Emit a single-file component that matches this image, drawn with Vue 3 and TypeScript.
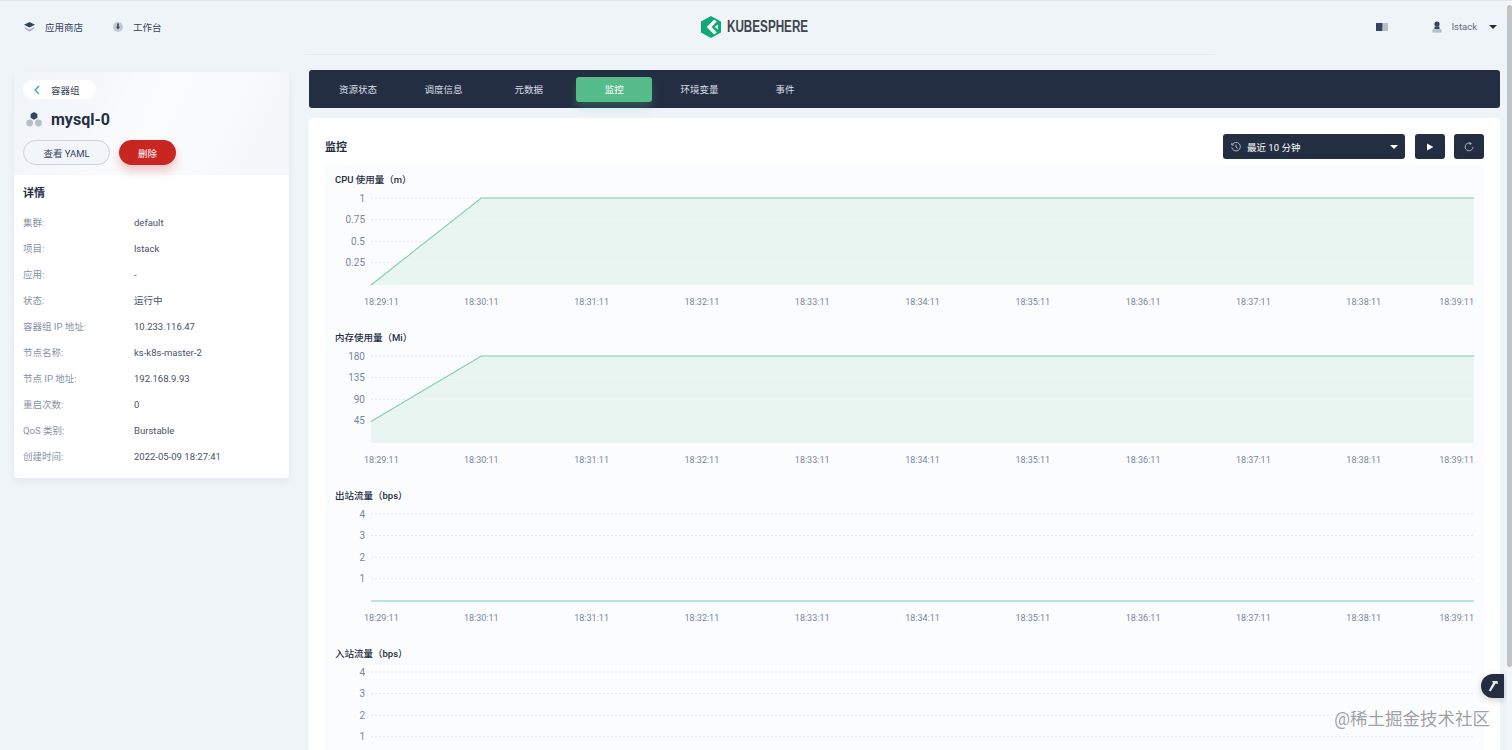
<script setup lang="ts">
interface Row { k: string; v: string }
interface Chart { title: string; ticks: string[]; points: number[]; filled: boolean; axis: boolean }

const rows: Row[] = [
  { k: '集群:', v: 'default' },
  { k: '项目:', v: 'lstack' },
  { k: '应用:', v: '-' },
  { k: '状态:', v: '运行中' },
  { k: '容器组 IP 地址:', v: '10.233.116.47' },
  { k: '节点名称:', v: 'ks-k8s-master-2' },
  { k: '节点 IP 地址:', v: '192.168.9.93' },
  { k: '重启次数:', v: '0' },
  { k: 'QoS 类别:', v: 'Burstable' },
  { k: '创建时间:', v: '2022-05-09 18:27:41' },
]
const tabs = ['资源状态', '调度信息', '元数据', '监控', '环境变量', '事件']
const times = ['18:29:11', '18:30:11', '18:31:11', '18:32:11', '18:33:11', '18:34:11', '18:35:11', '18:36:11', '18:37:11', '18:38:11', '18:39:11']

const L = 46
const R = 1149
const T = 10
const B = 97
const S = (R - L) / 10

const charts: Chart[] = [
  { title: 'CPU 使用量（m）', ticks: ['1', '0.75', '0.5', '0.25'], points: [B, T], filled: true, axis: true },
  { title: '内存使用量（Mi）', ticks: ['180', '135', '90', '45'], points: [T + 65.5, T], filled: true, axis: true },
  { title: '出站流量（bps）', ticks: ['4', '3', '2', '1'], points: [B, B], filled: false, axis: true },
  { title: '入站流量（bps）', ticks: ['4', '3', '2', '1'], points: [B, B], filled: false, axis: false },
]

function tickY(i: number): number {
  return T + i * 21.6
}
function linePath(p: number[]): string {
  return `M${L} ${p[0]} L${L + S} ${p[1]} L${R} ${p[1]}`
}
function areaPath(p: number[]): string {
  return `${linePath(p)} L${R} ${B} L${L} ${B} Z`
}
function timeX(i: number): number {
  if (i === 0) return 39
  if (i === 10) return R
  return L + S * i
}
function timeAnchor(i: number): string {
  if (i === 0) return 'start'
  if (i === 10) return 'end'
  return 'middle'
}
</script>

<template>
  <div class="page">
    <header class="topbar">
      <nav class="nav-left">
        <a class="nav-item">
          <svg width="11" height="10" viewBox="0 0 11 10">
            <path d="M5.5 0 L11 2.8 L5.5 5.6 L0 2.8 Z" fill="#36435c" />
            <path d="M0.6 5 L5.5 7.4 L10.4 5 L10.4 6.4 L5.5 9.8 L0.6 6.4 Z" fill="#abb4be" />
          </svg>
          应用商店
        </a>
        <a class="nav-item">
          <svg width="10" height="10" viewBox="0 0 10 10">
            <circle cx="5" cy="5" r="5" fill="#c1c9d1" />
            <path d="M4.2 1.5 H5.8 V4.8 H7 L5 7.4 L3 4.8 H4.2 Z" fill="#36435c" />
          </svg>
          工作台
        </a>
      </nav>
      <div class="logo">
        <svg width="20" height="22" viewBox="0 0 20 22">
          <path d="M10 0 L20 5.5 V16.5 L10 22 L0 16.5 V5.5 Z" fill="#12a873" />
          <path d="M13 3.4 L5.8 11 L13 18.6 L15.8 16.4 L10.6 11 L15.8 5.6 Z" fill="#fff" />
          <path d="M13.6 11 L17 8.4 V13.6 Z" fill="#fff" />
        </svg>
        <span class="logo-text">KUBESPHERE</span>
      </div>
      <div class="nav-right">
        <svg class="book" width="12" height="8" viewBox="0 0 12 8">
          <rect width="6.5" height="8" fill="#36435c" />
          <rect x="7" width="5" height="8" fill="#b6bfc8" />
        </svg>
        <svg class="user" width="10" height="12" viewBox="0 0 10 12">
          <circle cx="5" cy="3" r="2.6" fill="#36435c" />
          <path d="M2.6 5.6 H7.4 L7.6 8 H2.4 Z" fill="#36435c" />
          <path d="M0.4 8.2 H9.6 V11.6 H0.4 Z" fill="#b6bfc8" />
        </svg>
        <span class="user-name">lstack</span>
        <span class="caret dark"></span>
      </div>
    </header>
    <div class="top-rule"></div>

    <div class="content">
      <aside class="side">
        <div class="side-head">
          <div class="crumb">
            <svg width="6" height="10" viewBox="0 0 6 10">
              <path d="M5 1 L1 5 L5 9" fill="none" stroke="#329dce" stroke-width="1.3" />
            </svg>
            <span>容器组</span>
          </div>
          <div class="pod-name">
            <svg width="16" height="15" viewBox="0 0 16 15">
              <path d="M8 0 L11.4 2 V5.8 L8 7.8 L4.6 5.8 V2 Z" fill="#36435c" />
              <circle cx="3.6" cy="11" r="3.4" fill="#b6bfc8" />
              <circle cx="12.4" cy="11" r="3.4" fill="#b6bfc8" />
            </svg>
            <h1>mysql-0</h1>
          </div>
          <div class="side-actions">
            <button class="btn-outline">查看 YAML</button>
            <button class="btn-danger">删除</button>
          </div>
        </div>
        <div class="side-body">
          <h2>详情</h2>
          <dl>
            <div v-for="r in rows" :key="r.k" class="row">
              <dt>{{ r.k }}</dt>
              <dd>{{ r.v }}</dd>
            </div>
          </dl>
        </div>
      </aside>

      <main class="main">
        <div class="tabs">
          <div v-for="t in tabs" :key="t" class="tab" :class="{ active: t === '监控' }">{{ t }}</div>
        </div>
        <section class="panel">
          <div class="panel-head">
            <h2>监控</h2>
            <div class="tools">
              <div class="select">
                <svg width="10" height="10" viewBox="0 0 10 10" fill="none" stroke="#b6bfc8" stroke-width="0.9">
                  <path d="M1.4 2.4 A4.3 4.3 0 1 1 0.8 5.4" />
                  <path d="M0.8 1 V3 H2.8" />
                  <path d="M5 2.6 V5.2 L6.8 6.4" />
                </svg>
                <span class="select-text">最近 10 分钟</span>
                <span class="caret light"></span>
              </div>
              <button class="tool">
                <svg width="8" height="8" viewBox="0 0 8 8"><path d="M1 0.5 L7.4 4 L1 7.5 Z" fill="#fff" /></svg>
              </button>
              <button class="tool">
                <svg width="10" height="10" viewBox="0 0 10 10" fill="none" stroke="#b6bfc8" stroke-width="0.9">
                  <path d="M6.4 1.3 A3.9 3.9 0 1 0 8.9 5" />
                  <path d="M5.6 0 L7.8 1.6 L5.8 3.2" fill="#b6bfc8" stroke="none" />
                </svg>
              </button>
            </div>
          </div>
          <div class="charts">
            <div v-for="(c, ci) in charts" :key="c.title" class="chart">
              <div class="chart-title">{{ c.title }}</div>
              <svg class="plot" width="1160" height="128" viewBox="0 0 1160 128">
                <defs v-if="c.filled">
                  <clipPath :id="`area-${ci}`"><path :d="areaPath(c.points)" /></clipPath>
                </defs>
                <path v-if="c.filled" :d="areaPath(c.points)" fill="#55bc8a" fill-opacity="0.11" />
                <g v-for="(t, i) in c.ticks" :key="t">
                  <line :x1="L" :x2="R" :y1="tickY(i)" :y2="tickY(i)" class="grid" />
                  <line v-if="c.filled" :x1="L" :x2="R" :y1="tickY(i)" :y2="tickY(i)" class="grid-light" :clip-path="`url(#area-${ci})`" />
                  <text :x="40" :y="tickY(i) + 3.5" text-anchor="end" class="tick">{{ t }}</text>
                </g>
                <path v-if="c.axis" :d="linePath(c.points)" fill="none" stroke="#7fcfa8" stroke-width="1.1" />
                <template v-if="c.axis">
                  <text v-for="(tm, i) in times" :key="tm" :x="timeX(i)" y="117" :text-anchor="timeAnchor(i)" class="time">{{ tm }}</text>
                </template>
              </svg>
            </div>
          </div>
        </section>
      </main>
    </div>

    <div class="fab">
      <svg width="12" height="12" viewBox="0 0 12 12">
        <path d="M5 1 H10.5 L11 4 L8.6 3.6 L3.6 11.4 L1.8 10.4 L6 3 Z" fill="#e8edf2" />
      </svg>
    </div>
    <div class="watermark">@稀土掘金技术社区</div>
    <div class="scrollbar"><div class="thumb"></div></div>
  </div>
</template>

<style>
html, body { margin: 0; height: 750px; overflow: hidden; background: #eff4f9; }
</style>

<style scoped>
.page {
  position: relative;
  height: 750px;
  overflow: hidden;
  box-sizing: border-box;
  border-top: 1px solid #dfe4ea;
  background: #eff4f9;
  font-family: Roboto, "Noto Sans CJK SC", sans-serif;
  font-size: 9.5px;
  color: #36435c;
}
.topbar {
  display: grid;
  grid-template-columns: 1fr auto 1fr;
  align-items: center;
  box-sizing: border-box;
  height: 53px;
  padding: 0 15px 2px 24px;
}
.nav-left { display: flex; gap: 30px; }
.nav-item { display: flex; align-items: center; gap: 10px; color: #36435c; }
.logo { display: flex; align-items: center; gap: 6px; margin-right: 12px; }
.logo-text {
  font-family: "Liberation Sans", sans-serif;
  font-size: 16px;
  font-weight: 700;
  color: #3f4450;
  transform: scaleX(0.73);
  transform-origin: left center;
  width: 81px;
  white-space: nowrap;
}
.nav-right { display: flex; align-items: center; justify-content: flex-end; }
.book { margin-right: 44px; }
.user { margin-right: 10px; }
.user-name { margin-right: 12px; color: #5c6a80; }
.caret { display: block; width: 0; height: 0; border-left: 4px solid transparent; border-right: 4px solid transparent; }
.caret.dark { border-top: 4px solid #242e42; }
.caret.light { border-top: 4px solid #fff; }
.top-rule {
  height: 1px;
  margin-right: 297px;
  margin-left: 305px;
  background: #e6ebf0;
}
.content { display: flex; align-items: flex-start; gap: 20px; padding: 15px 12px 0 14px; }
.side {
  width: 275px;
  flex: none;
  margin-top: 2px;
  border-radius: 4px;
  box-shadow: 0 4px 8px rgba(36, 46, 66, 0.05);
  overflow: hidden;
}
.side-head {
  box-sizing: border-box;
  height: 103px;
  padding: 8px 9px 0;
  background: linear-gradient(115deg, #f0f5fa 0%, #f4f7fb 25%, #fbfcfe 50%, #f3f6fa 100%);
}
.crumb {
  display: inline-flex;
  align-items: center;
  gap: 11px;
  box-sizing: border-box;
  height: 19px;
  width: 73px;
  padding-left: 11px;
  border-radius: 10px;
  background: #fff;
}
.pod-name { display: flex; align-items: center; gap: 9px; margin: 8px 0 0 3px; height: 24px; }
.pod-name h1 { margin: 0; font-size: 16px; font-weight: 700; color: #242e42; }
.side-actions { display: flex; gap: 9px; margin-top: 9px; }
button { font-family: inherit; font-size: 9.5px; padding: 0; cursor: pointer; }
.btn-outline {
  width: 87px;
  height: 25px;
  border: 1px solid #ccd3db;
  border-radius: 13px;
  background: #f2f5f9;
  color: #36435c;
}
.btn-danger {
  width: 57px;
  height: 25px;
  border: 0;
  border-radius: 13px;
  background: #ca2621;
  color: #fff;
  box-shadow: 0 6px 10px rgba(202, 38, 33, 0.25);
}
.side-body { background: #fff; padding: 11px 9px 9px; height: 303px; box-sizing: border-box; }
.side-body h2 { margin: 0; font-size: 11px; line-height: 16px; font-weight: 700; color: #242e42; }
dl { margin: 7px 0 0; }
.row { display: flex; height: 26px; align-items: center; }
dt { width: 111px; color: #8792a5; }
dd { margin: 0; color: #475268; }
.main { flex: 1; min-width: 0; }
.tabs {
  display: flex;
  gap: 9.4px;
  box-sizing: border-box;
  height: 38px;
  padding: 7px 11px;
  border-radius: 3px;
  background: #242e42;
}
.tab {
  width: 76px;
  height: 25px;
  line-height: 25px;
  text-align: center;
  border-radius: 3px;
  color: #d8dee5;
}
.tab.active {
  background: #55bc8a;
  color: #fff;
  box-shadow: 0 6px 10px rgba(85, 188, 138, 0.25);
}
.panel {
  margin-top: 10px;
  height: 640px;
  padding: 16px 16px 0;
  background: #fff;
  border-radius: 3px;
}
.panel-head { display: flex; align-items: center; justify-content: space-between; height: 25px; }
.panel-head h2 { margin: 0 0 2px; font-size: 11px; font-weight: 700; color: #242e42; }
.tools { display: flex; gap: 9.5px; }
.select {
  display: flex;
  align-items: center;
  box-sizing: border-box;
  width: 182px;
  height: 25px;
  padding: 0 7px 0 8px;
  border-radius: 3px;
  background: #242e42;
  color: #fff;
}
.select-text { flex: 1; margin-left: 6px; }
.tool {
  display: flex;
  align-items: center;
  justify-content: center;
  width: 30px;
  height: 25px;
  border: 0;
  border-radius: 3px;
  background: #242e42;
}
.charts { margin-top: 6px; padding-top: 3px; background: #fbfcfe; }
.chart { height: 158px; box-sizing: border-box; padding-top: 4px; }
.chart-title { height: 16px; padding-left: 10px; line-height: 16px; font-size: 9.5px; font-weight: 500; color: #242e42; }
.plot { display: block; }
.grid { stroke: #e6e9ee; stroke-width: 1; stroke-dasharray: 2 2; }
.grid-light { stroke: #f6faf8; stroke-width: 1; stroke-dasharray: 2 2; }
.tick { font-size: 10px; fill: #79879c; }
.time { font-size: 9px; fill: #79879c; }
.fab {
  position: absolute;
  left: 1481px;
  top: 673px;
  display: flex;
  align-items: center;
  justify-content: center;
  width: 23px;
  height: 24px;
  border-radius: 12px 0 0 12px;
  background: #242e42;
  box-shadow: 0 2px 6px rgba(36, 46, 66, 0.25);
}
.watermark {
  position: absolute;
  right: 22px;
  top: 705px;
  font-size: 17.5px;
  line-height: 26px;
  color: rgba(120, 120, 120, 0.7);
  white-space: nowrap;
}
.scrollbar {
  position: absolute;
  right: 0;
  top: -1px;
  width: 5px;
  height: 750px;
  background: #f4f5f6;
}
.thumb {
  position: absolute;
  top: 5px;
  right: 0;
  width: 5px;
  height: 662px;
  border-radius: 3px;
  background: #c2c2c2;
}
</style>
